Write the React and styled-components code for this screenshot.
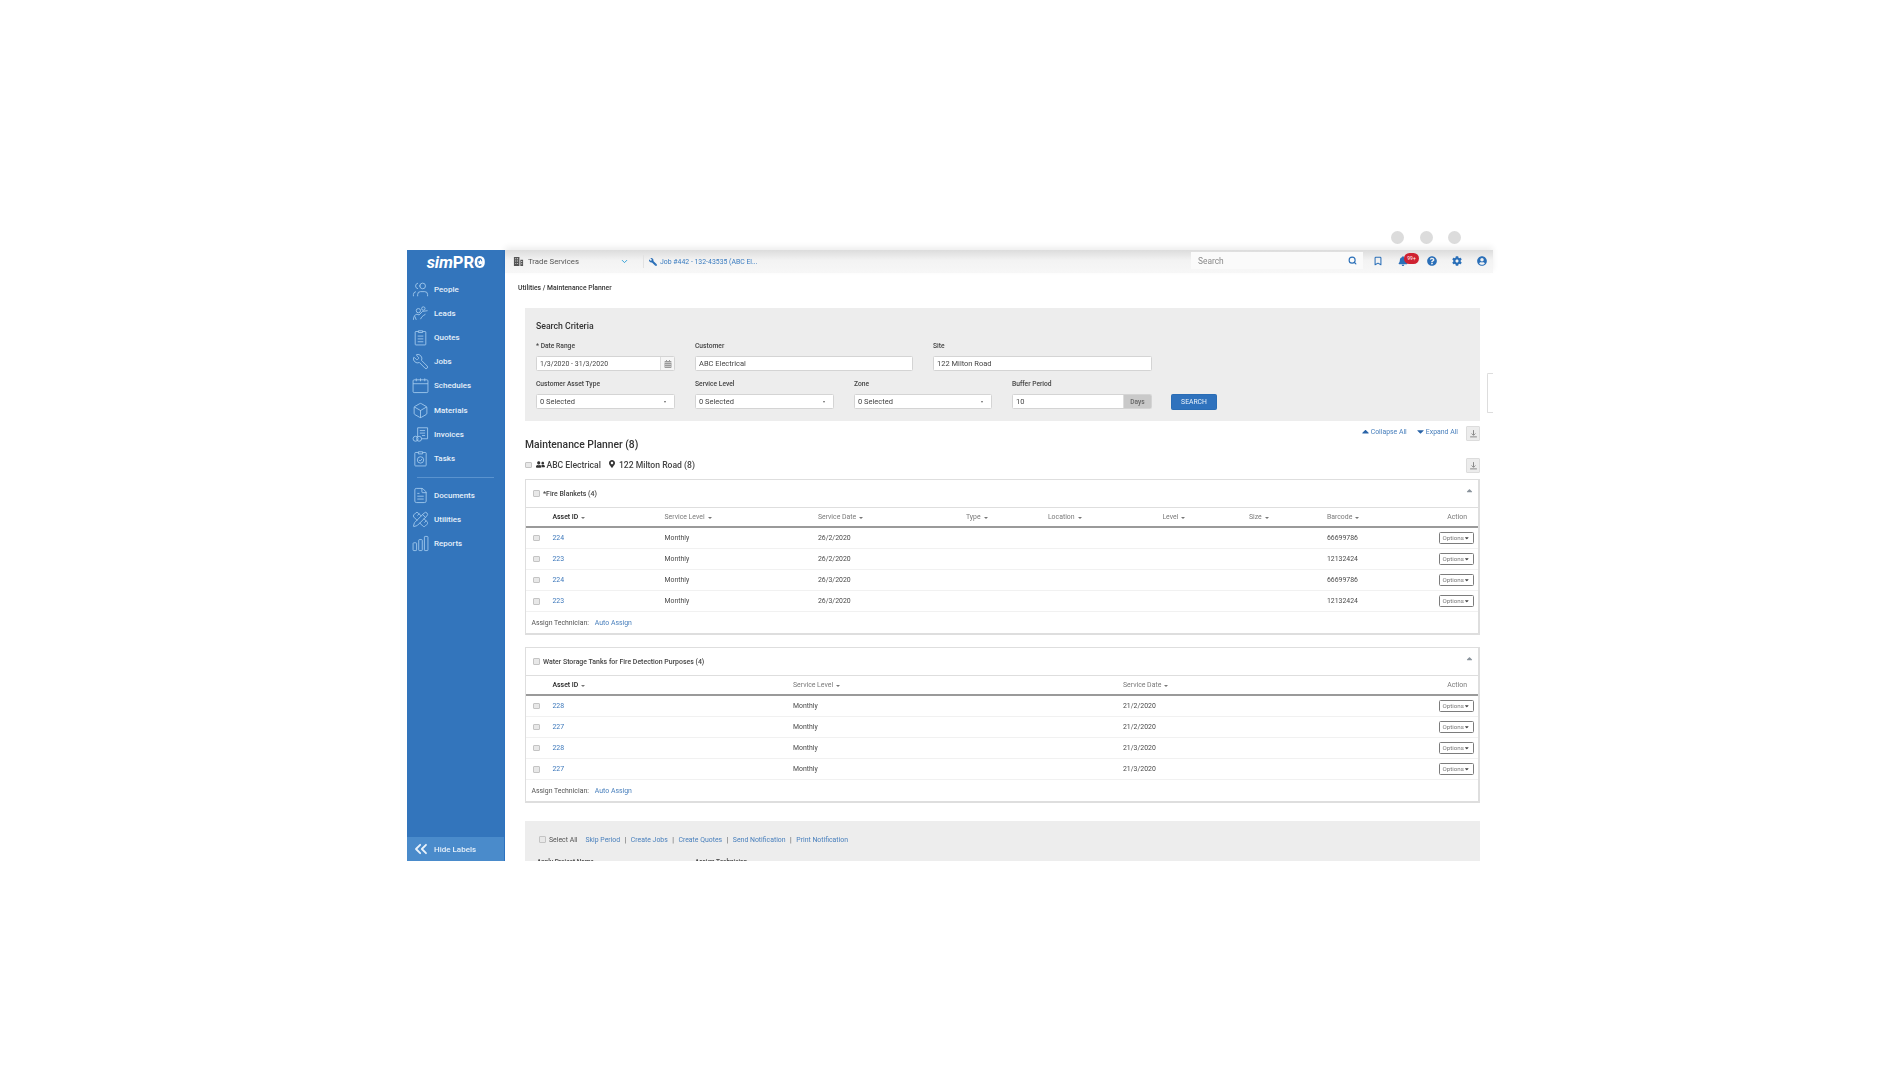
import styled, { createGlobalStyle } from "styled-components";
import { Users, Wrench, Box, FileText, PencilRuler, ChevronsLeft, Search, Bookmark, ChevronDown } from "lucide-react";
import { FaBell, FaQuestionCircle, FaCog, FaUserCircle, FaWrench, FaUserFriends, FaMapMarkerAlt, FaCalendarAlt, FaCaretDown, FaCaretUp } from "react-icons/fa";

const GlobalStyle = createGlobalStyle`
  html, body { margin: 0; padding: 0; background: #fff; }
  * { box-sizing: border-box; }
  body { font-family: Roboto, "Liberation Sans", sans-serif; color: #444; }
`;

const Page = styled.div`
  width: 1900px;
  height: 1086px;
  padding: 231px 0 0 407px;
  overflow: hidden;
  background: #fff;
`;

const Dots = styled.div`
  width: 1086px;
  height: 13px;
  margin-bottom: 6px;
  padding-right: 32px;
  display: flex;
  justify-content: flex-end;
  gap: 15.5px;
  & > span {
    width: 13px;
    height: 13px;
    border-radius: 50%;
    background: #dcdcdc;
  }
`;

const Window = styled.div`
  position: relative;
  width: 1086px;
  height: 611px;
  display: flex;
  filter: blur(0.3px);
`;

const Sidebar = styled.aside`
  width: 98px;
  height: 100%;
  flex: none;
  display: flex;
  flex-direction: column;
  background: #3375bc;
  border-right: 1px solid #2c72c0;
`;

const Logo = styled.div`
  height: 24px;
  display: flex;
  align-items: center;
  justify-content: center;
  color: #fff;
  font-size: 16.6px;
  font-weight: 700;
  letter-spacing: -0.1px;
  padding-left: 1px;
  & > em { font-style: italic; font-weight: 700; }
`;

const LogoO = styled.span`
  position: relative;
  & > svg {
    position: absolute;
    left: 3.2px;
    top: 6px;
    width: 7px;
    height: 7px;
    fill: #fff;
  }
`;

const NavList = styled.nav`
  display: flex;
  flex-direction: column;
  padding-top: 3.5px;
`;

const NavItem = styled.div`
  height: 24.1px;
  display: flex;
  align-items: center;
  padding-left: 4.5px;
  color: #e6f0fa;
  font-size: 8px;
  font-weight: 500;
  & > svg {
    width: 17px;
    height: 17px;
    margin-right: 5.5px;
    flex: none;
    fill: none;
    stroke: #a8cdf0;
    stroke-width: 1.2;
    transform: ${(p) => (p.$flip ? "scaleX(-1)" : "none")};
  }
`;

const NavDivider = styled.div`
  height: 1px;
  margin: 6.5px 10px 5.5px;
  background: #5a93cf;
`;

const HideLabels = styled(NavItem)`
  margin-top: auto;
  height: 24px;
  background: #4a8bcb;
  & > svg {
    width: 20px;
    height: 20px;
    margin: 0 3px 0 -0.5px;
    stroke: #e8f2fb;
    stroke-width: 2.2;
  }
`;

const Main = styled.div`
  flex: 1;
  min-width: 0;
  height: 100%;
  display: flex;
  flex-direction: column;
`;

const Topbar = styled.header`
  height: 23px;
  flex: none;
  display: flex;
  align-items: center;
  background: linear-gradient(#dcdcdc, #f3f3f3 45%, #f7f7f7);
  box-shadow: 0 -3px 6px rgba(0, 0, 0, 0.07);
  font-size: 7.8px;
  color: #555;
`;

const CompanySwitch = styled.div`
  width: 138px;
  height: 100%;
  flex: none;
  display: flex;
  align-items: center;
  padding-left: 8px;
  gap: 4px;
  & > svg:last-child {
    margin-left: auto;
    margin-right: 14px;
    color: #2b9ed8;
  }
`;

const JobLink = styled.a`
  height: 13px;
  display: flex;
  align-items: center;
  gap: 3px;
  padding-left: 5px;
  border-left: 1px solid #e2e2e2;
  color: #3a7cc0;
  font-size: 6.9px;
  & > svg { color: #2a6fb8; transform: scaleX(-1); }
`;

const SearchBox = styled.div`
  width: 172px;
  height: 17px;
  margin-left: auto;
  margin-top: -2px;
  padding: 0 6px 0 7px;
  display: flex;
  align-items: center;
  justify-content: space-between;
  background: #fafafa;
  color: #8a8a8a;
  font-size: 8.4px;
  & > svg { color: #2a6fb8; }
`;

const TopIcons = styled.div`
  display: flex;
  width: 130px;
  height: 100%;
  flex: none;
  align-items: center;
  position: relative;
  color: #2a6fb8;
`;

const TopIcon = styled.span`
  position: absolute;
  top: 6px;
  left: ${(p) => p.$left}px;
  width: 10px;
  height: 10px;
  display: flex;
  & > svg { width: 100%; height: 100%; }
`;

const Badge = styled.span`
  position: absolute;
  left: 41px;
  top: 3px;
  width: 15px;
  height: 11px;
  border-radius: 6px;
  background: #cf2231;
  color: #fff;
  font-size: 5px;
  line-height: 10px;
  text-align: center;
`;

const Content = styled.div`
  flex: 1;
  min-height: 0;
  overflow: hidden;
  padding: 0 13px 0 20px;
`;

const Breadcrumb = styled.div`
  height: 30px;
  margin: 0 0 5px -7px;
  display: flex;
  align-items: center;
  font-size: 6.8px;
  font-weight: 500;
  color: #333;
`;

const Panel = styled.section`
  background: #ededed;
  height: ${(p) => p.$height}px;
  padding: ${(p) => p.$padding};
`;

const PanelTitle = styled.h3`
  margin: 0 0 10px;
  height: 10px;
  line-height: 10px;
  font-size: 8.7px;
  font-weight: 500;
  color: #333;
`;

const FormRow = styled.div`
  display: flex;
  align-items: flex-end;
  gap: 20px;
  margin-bottom: ${(p) => p.$bottom || 0}px;
`;

const Field = styled.div`
  width: ${(p) => p.$width}px;
  flex: none;
`;

const Label = styled.label`
  display: block;
  height: 10px;
  line-height: 10px;
  margin-bottom: 5px;
  font-size: 6.7px;
  font-weight: 500;
  color: #444;
`;

const Input = styled.div`
  height: 15px;
  display: flex;
  align-items: center;
  justify-content: space-between;
  padding-left: 3px;
  border: 1px solid #d4d4d4;
  border-radius: 1.5px;
  background: #fff;
  font-size: ${(p) => p.$size || 7.5}px;
  color: #444;
  overflow: hidden;
`;

const Addon = styled.span`
  height: 100%;
  width: ${(p) => p.$width}px;
  display: flex;
  align-items: center;
  justify-content: center;
  background: ${(p) => p.$bg};
  color: #666;
  font-size: 6.6px;
  font-weight: 500;
  border-left: 1px solid #ddd;
`;

const Arrow = styled.span`
  width: 0;
  height: 0;
  margin-right: 8px;
  border-left: 1.5px solid transparent;
  border-right: 1.5px solid transparent;
  border-top: 2.5px solid #666;
`;

const SearchButton = styled.button`
  width: 46px;
  height: 16px;
  margin: 0 0 -1px -1px;
  padding: 0;
  border: 1px solid #2a6db5;
  border-radius: 1.5px;
  background: #2f72bd;
  color: #e9f2fb;
  font-family: inherit;
  font-size: 6.8px;
`;

const HeadingBlock = styled.div`
  height: 58px;
  display: flex;
  justify-content: space-between;
`;

const HeadingLeft = styled.div`
  padding-top: 17px;
`;

const Heading = styled.h2`
  margin: 0 0 6px;
  height: 14px;
  line-height: 14px;
  font-size: 10.3px;
  font-weight: 500;
  color: #333;
`;

const SiteRow = styled.div`
  height: 14px;
  display: flex;
  align-items: center;
  font-size: 8.6px;
  font-weight: 500;
  color: #444;
  & > svg { flex: none; color: #333; }
`;

const PeopleMark = styled(FaUserFriends)`
  margin: -2px 1.5px 0 4.5px;
`;

const PinMark = styled(FaMapMarkerAlt)`
  margin: -2px 3px 0 7px;
`;

const HeadingRight = styled.div`
  padding-top: 5px;
  display: flex;
  flex-direction: column;
  align-items: flex-end;
  gap: 16.5px;
`;

const Actions = styled.div`
  height: 15px;
  display: flex;
  align-items: flex-start;
  gap: 8px;
  font-size: 6.9px;
  color: #4a80bd;
`;

const ActionLink = styled.a`
  display: flex;
  align-items: center;
  height: 11px;
  & > svg { color: #2a64a8; }
`;

const DownloadButton = styled.button`
  width: 14px;
  height: 15px;
  padding: 0;
  display: flex;
  align-items: center;
  justify-content: center;
  border: 1px solid #dcdcdc;
  border-radius: 1px;
  background: #ececec;
  color: #888;
`;

const Card = styled.section`
  height: 156px;
  margin-bottom: ${(p) => p.$bottom}px;
  display: flex;
  flex-direction: column;
  border: 1px solid #dedede;
  border-width: 1px 2px 2px 1px;
`;

const CardHead = styled.div`
  height: 28px;
  flex: none;
  display: flex;
  align-items: center;
  padding: 0 4px 0 7px;
  border-bottom: 1px solid #dedede;
  font-size: 6.95px;
  font-weight: 500;
  color: #444;
  gap: 3.5px;
  & > svg { margin: -6px 0 0 auto; color: #8a939c; }
`;

const Check = styled.input.attrs({ type: "checkbox", readOnly: true })`
  appearance: none;
  width: 6.5px;
  height: 6.5px;
  margin: 0;
  flex: none;
  border: 1px solid #c4c4c4;
  border-radius: 1px;
  background: #e8e8e8;
`;

const TableHead = styled.div`
  height: 20px;
  flex: none;
  display: grid;
  grid-template-columns: ${(p) => p.$cols};
  align-items: center;
  border-bottom: 2px solid #9a9a9a;
  font-size: 6.9px;
  color: #7a7a7a;
`;

const HeadCell = styled.span`
  display: flex;
  align-items: center;
  gap: 3px;
  font-weight: ${(p) => (p.$active ? 500 : 400)};
  color: ${(p) => (p.$active ? "#222" : "#7a7a7a")};
`;

const SortMark = styled.span`
  width: 0;
  height: 0;
  margin-top: 1px;
  border-left: 2px solid transparent;
  border-right: 2px solid transparent;
  border-top: 2.5px solid #777;
`;

const ActionHead = styled.span`
  text-align: right;
  padding-right: 11px;
`;

const Row = styled.div`
  height: 21.1px;
  flex: none;
  display: grid;
  grid-template-columns: ${(p) => p.$cols};
  align-items: center;
  border-bottom: 1px solid #f1f1f1;
  font-size: 6.9px;
  color: #4a4a4a;
`;

const CheckCell = styled.span`
  display: flex;
  padding-left: 7px;
`;

const AssetLink = styled.a`
  color: #3d78bb;
`;

const OptionsCell = styled.span`
  display: flex;
  justify-content: flex-end;
  padding-right: 4.5px;
`;

const OptionsButton = styled.button`
  width: 35px;
  height: 12px;
  padding: 0 3px;
  display: flex;
  align-items: center;
  justify-content: space-between;
  border: 1px solid #7c7c7c;
  border-radius: 1.5px;
  background: #fff;
  color: #7a7a7a;
  font-family: inherit;
  font-size: 6.2px;
  & > svg { color: #444; }
`;

const CardFoot = styled.div`
  flex: 1;
  display: flex;
  align-items: center;
  gap: 6px;
  padding-left: 5.5px;
  font-size: 6.9px;
  color: #555;
  & > a { color: #4a80bd; }
`;

const BulkBar = styled.div`
  height: 18px;
  margin-bottom: 9.5px;
  display: flex;
  align-items: center;
  font-size: 6.9px;
  color: #555;
  gap: 4.5px;
  & > a { color: #4a80bd; }
  & > i { font-style: normal; color: #555; }
`;

const SelectAll = styled.span`
  display: flex;
  align-items: center;
  gap: 3.5px;
  margin-right: 3.5px;
`;

const BulkFields = styled.div`
  display: flex;
  margin-left: -2px;
  font-size: 6.4px;
  font-weight: 500;
  color: #444;
  & > span { width: 158px; }
`;

const SideTab = styled.div`
  position: absolute;
  right: 0;
  top: 123px;
  width: 6px;
  height: 40px;
  border: 1px solid #ddd;
  border-right: none;
  border-radius: 1.5px 0 0 1.5px;
  background: #fff;
`;

const LeadsIcon = () => (
  <svg viewBox="0 0 24 24">
    <circle cx="9" cy="8" r="3" />
    <circle cx="16" cy="5" r="2.4" />
    <path d="M2 21c0-4 2-8 5-8l3 1 5-5 7-1M4 16l2 5M12 20c1-2 2-4 4-5l3-2" />
  </svg>
);

const QuotesIcon = () => (
  <svg viewBox="0 0 24 24">
    <path d="M9 3.5H5.5a1 1 0 0 0-1 1v17a1 1 0 0 0 1 1h13a1 1 0 0 0 1-1v-17a1 1 0 0 0-1-1H15" />
    <path d="M9 5V2.5h6V5zM8 10h8M8 14h8M8 18h8" />
  </svg>
);

const ScheduleIcon = () => (
  <svg viewBox="0 0 24 24">
    <rect x="1.5" y="4" width="21" height="18" rx="1.5" />
    <path d="M1.5 9.5h21M6 2v4M12 2v4M18 2v4" />
  </svg>
);

const InvoicesIcon = () => (
  <svg viewBox="0 0 24 24">
    <path d="M8 15V2.5h14V18H13M11 6.5h7.5M11 10h7.5M14 13.5h4.5" />
    <ellipse cx="5" cy="18" rx="3.5" ry="3.5" />
    <ellipse cx="10" cy="18" rx="3.5" ry="3.5" />
  </svg>
);

const TasksIcon = () => (
  <svg viewBox="0 0 24 24">
    <path d="M9 3.5H5a1 1 0 0 0-1 1v17a1 1 0 0 0 1 1h14a1 1 0 0 0 1-1v-17a1 1 0 0 0-1-1h-4" />
    <path d="M9 5.5v-3h6v3z" />
    <circle cx="12" cy="14" r="4.5" />
    <path d="M10 14l1.6 1.6 2.6-3" />
  </svg>
);

const ReportsIcon = () => (
  <svg viewBox="0 0 24 24">
    <rect x="1.5" y="11" width="5" height="11" rx="1" />
    <rect x="9.5" y="6.5" width="5" height="15.5" rx="1" />
    <rect x="17.5" y="2" width="5" height="20" rx="1" />
  </svg>
);

const BuildingIcon = () => (
  <svg width="11" height="11" viewBox="0 0 24 24" fill="#555">
    <path d="M2 2h12v20H2zM16 8h6v14h-6z" />
    <path fill="#eee" d="M5 5h2v2H5zM9 5h2v2H9zM5 10h2v2H5zM9 10h2v2H9zM5 15h2v2H5zM9 15h2v2H9zM18 11h2v2h-2zM18 16h2v2h-2z" />
  </svg>
);

const DownloadIcon = () => (
  <svg width="9" height="9" viewBox="0 0 24 24" fill="none" stroke="currentColor" strokeWidth="2.6">
    <path d="M12 3v13M7 12l5 5 5-5M3 21h18" />
  </svg>
);

const navTop = [
  ["People", <Users key="i" />, true],
  ["Leads", <LeadsIcon key="i" />],
  ["Quotes", <QuotesIcon key="i" />],
  ["Jobs", <Wrench key="i" />, true],
  ["Schedules", <ScheduleIcon key="i" />],
  ["Materials", <Box key="i" />],
  ["Invoices", <InvoicesIcon key="i" />],
  ["Tasks", <TasksIcon key="i" />],
];

const navBottom = [
  ["Documents", <FileText key="i" />],
  ["Utilities", <PencilRuler key="i" />],
  ["Reports", <ReportsIcon key="i" />],
];

const blanketCols = "26.5px 112px 153.4px 148px 82px 114.5px 86.5px 78px 100px 1fr";
const tankCols = "26.5px 240.5px 330px 1fr 100px";

const blanketRows = [
  ["224", "26/2/2020", "66699786"],
  ["223", "26/2/2020", "12132424"],
  ["224", "26/3/2020", "66699786"],
  ["223", "26/3/2020", "12132424"],
];

const tankRows = [
  ["228", "21/2/2020"],
  ["227", "21/2/2020"],
  ["228", "21/3/2020"],
  ["227", "21/3/2020"],
];

const Options = () => (
  <OptionsCell>
    <OptionsButton>
      Options <FaCaretDown size={6} />
    </OptionsButton>
  </OptionsCell>
);

const Sortable = ({ active, children }) => (
  <HeadCell $active={active}>
    {children} <SortMark />
  </HeadCell>
);

const AssetCard = ({ title, cols, headers, rows, bottom }) => (
  <Card $bottom={bottom}>
    <CardHead>
      <Check /> {title}
      <FaCaretUp size={9} />
    </CardHead>
    <TableHead $cols={cols}>
      <span />
      {headers.map((h, i) => (
        <Sortable key={h} active={i === 0}>
          {h}
        </Sortable>
      ))}
      <ActionHead>Action</ActionHead>
    </TableHead>
    {rows}
    <CardFoot>
      Assign Technician: <a>Auto Assign</a>
    </CardFoot>
  </Card>
);

export default function App() {
  return (
    <Page>
      <GlobalStyle />
      <Dots>
        <span />
        <span />
        <span />
      </Dots>
      <Window>
        <Sidebar>
          <Logo>
            <em>sim</em>PR
            <LogoO>
              O
              <svg viewBox="0 0 24 24">
                <path d="M12 1l3.2 6.5 7.3 1-5.2 5.1 1.2 7.2L12 17.5l-6.5 3.3 1.2-7.2L1.5 8.5l7.3-1z" />
              </svg>
            </LogoO>
          </Logo>
          <NavList>
            {navTop.map(([label, icon, flip]) => (
              <NavItem key={label} $flip={flip}>
                {icon}
                {label}
              </NavItem>
            ))}
            <NavDivider />
            {navBottom.map(([label, icon]) => (
              <NavItem key={label}>
                {icon}
                {label}
              </NavItem>
            ))}
          </NavList>
          <HideLabels>
            <ChevronsLeft />
            Hide Labels
          </HideLabels>
        </Sidebar>
        <Main>
          <Topbar>
            <CompanySwitch>
              <BuildingIcon />
              Trade Services
              <ChevronDown size={9} strokeWidth={2.5} />
            </CompanySwitch>
            <JobLink>
              <FaWrench size={8} />
              Job #442 - 132-43535 (ABC El...
            </JobLink>
            <SearchBox>
              Search
              <Search size={9} strokeWidth={3} />
            </SearchBox>
            <TopIcons>
              <TopIcon $left={10}>
                <Bookmark size={10} strokeWidth={2.5} />
              </TopIcon>
              <TopIcon $left={35}>
                <FaBell />
              </TopIcon>
              <Badge>99+</Badge>
              <TopIcon $left={64}>
                <FaQuestionCircle />
              </TopIcon>
              <TopIcon $left={89}>
                <FaCog />
              </TopIcon>
              <TopIcon $left={114}>
                <FaUserCircle />
              </TopIcon>
            </TopIcons>
          </Topbar>
          <Content>
            <Breadcrumb>Utilities / Maintenance Planner</Breadcrumb>
            <Panel $height={113} $padding="13px 11px 0">
              <PanelTitle>Search Criteria</PanelTitle>
              <FormRow $bottom={8}>
                <Field $width={139}>
                  <Label>* Date Range</Label>
                  <Input $size={7}>
                    1/3/2020 - 31/3/2020
                    <Addon $width={14} $bg="#f6f6f6">
                      <FaCalendarAlt size={8} color="#999" />
                    </Addon>
                  </Input>
                </Field>
                <Field $width={218}>
                  <Label>Customer</Label>
                  <Input>ABC Electrical</Input>
                </Field>
                <Field $width={219}>
                  <Label>Site</Label>
                  <Input>122 Milton Road</Input>
                </Field>
              </FormRow>
              <FormRow>
                <Field $width={139}>
                  <Label>Customer Asset Type</Label>
                  <Input>
                    0 Selected <Arrow />
                  </Input>
                </Field>
                <Field $width={139}>
                  <Label>Service Level</Label>
                  <Input>
                    0 Selected <Arrow />
                  </Input>
                </Field>
                <Field $width={138}>
                  <Label>Zone</Label>
                  <Input>
                    0 Selected <Arrow />
                  </Input>
                </Field>
                <Field $width={140}>
                  <Label>Buffer Period</Label>
                  <Input>
                    10
                    <Addon $width={28} $bg="#c9c9c9">
                      Days
                    </Addon>
                  </Input>
                </Field>
                <SearchButton>SEARCH</SearchButton>
              </FormRow>
            </Panel>
            <HeadingBlock>
              <HeadingLeft>
                <Heading>Maintenance Planner (8)</Heading>
                <SiteRow>
                  <Check />
                  <PeopleMark size={9} />
                  ABC Electrical
                  <PinMark size={8} />
                  122 Milton Road (8)
                </SiteRow>
              </HeadingLeft>
              <HeadingRight>
                <Actions>
                  <ActionLink>
                    <FaCaretUp size={11} /> Collapse All
                  </ActionLink>
                  <ActionLink>
                    <FaCaretDown size={11} /> Expand All
                  </ActionLink>
                  <DownloadButton>
                    <DownloadIcon />
                  </DownloadButton>
                </Actions>
                <DownloadButton>
                  <DownloadIcon />
                </DownloadButton>
              </HeadingRight>
            </HeadingBlock>
            <AssetCard
              bottom={12}
              title="*Fire Blankets (4)"
              cols={blanketCols}
              headers={["Asset ID", "Service Level", "Service Date", "Type", "Location", "Level", "Size", "Barcode"]}
              rows={blanketRows.map(([id, date, barcode], i) => (
                <Row key={i} $cols={blanketCols}>
                  <CheckCell>
                    <Check />
                  </CheckCell>
                  <AssetLink>{id}</AssetLink>
                  <span>Monthly</span>
                  <span>{date}</span>
                  <span />
                  <span />
                  <span />
                  <span />
                  <span>{barcode}</span>
                  <Options />
                </Row>
              ))}
            />
            <AssetCard
              bottom={18}
              title="Water Storage Tanks for Fire Detection Purposes (4)"
              cols={tankCols}
              headers={["Asset ID", "Service Level", "Service Date"]}
              rows={tankRows.map(([id, date], i) => (
                <Row key={i} $cols={tankCols}>
                  <CheckCell>
                    <Check />
                  </CheckCell>
                  <AssetLink>{id}</AssetLink>
                  <span>Monthly</span>
                  <span>{date}</span>
                  <Options />
                </Row>
              ))}
            />
            <Panel $height={60} $padding="9.5px 12px 0 14px">
              <BulkBar>
                <SelectAll>
                  <Check /> Select All
                </SelectAll>
                <a>Skip Period</a>
                <i>|</i>
                <a>Create Jobs</a>
                <i>|</i>
                <a>Create Quotes</a>
                <i>|</i>
                <a>Send Notification</a>
                <i>|</i>
                <a>Print Notification</a>
              </BulkBar>
              <BulkFields>
                <span>Apply Project Name</span>
                <span>Assign Technician</span>
              </BulkFields>
            </Panel>
          </Content>
        </Main>
        <SideTab />
      </Window>
    </Page>
  );
}
